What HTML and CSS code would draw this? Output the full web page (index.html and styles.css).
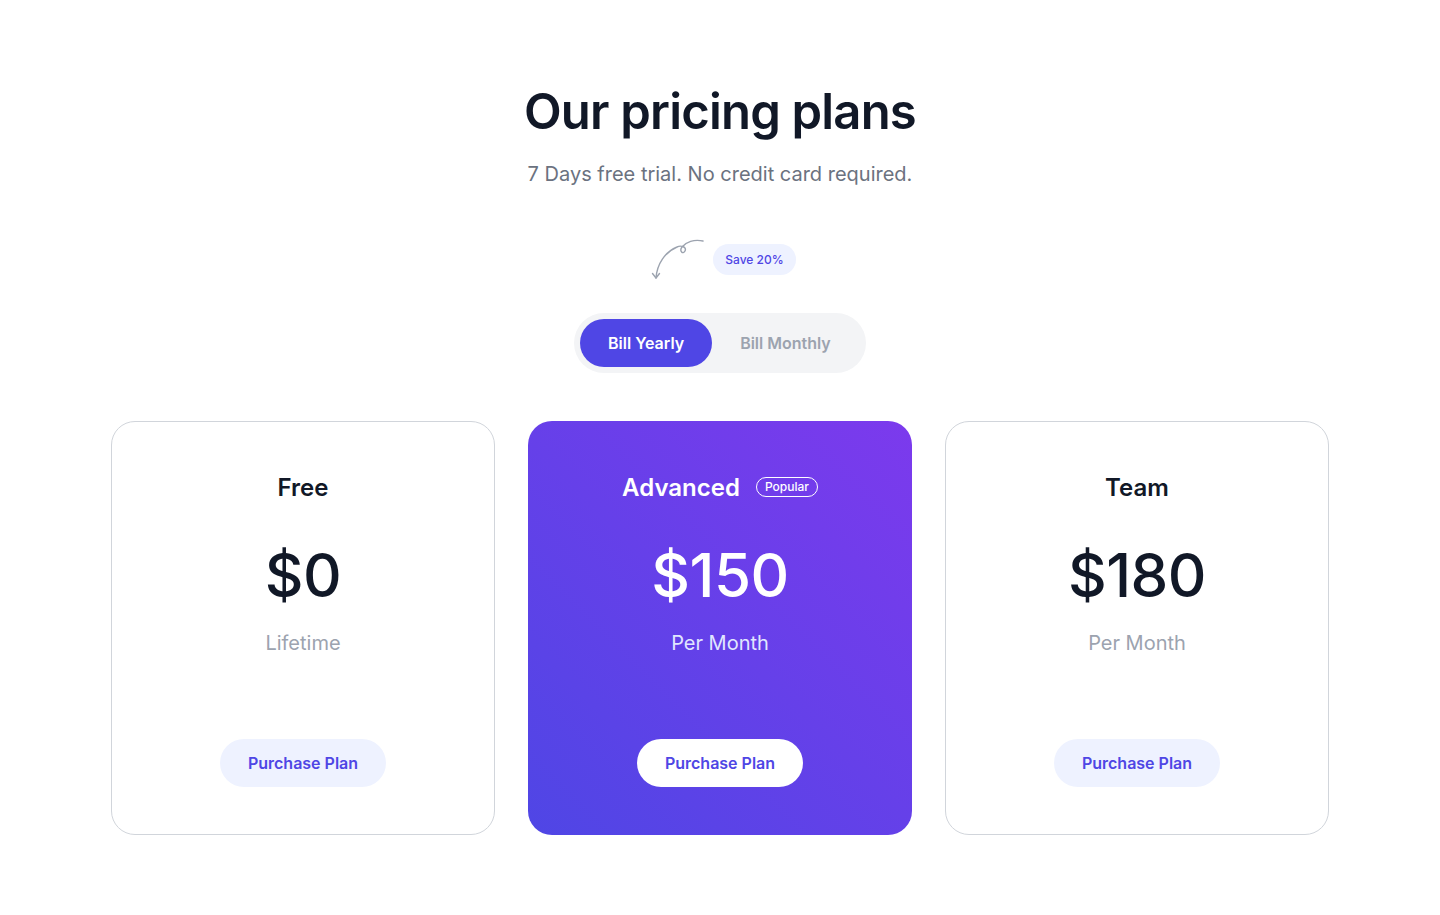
FILE: index.html
```html
<!DOCTYPE html>
<html lang="en">
<head>
<meta charset="utf-8">
<title>Pricing</title>
<link rel="stylesheet" href="styles.css">
</head>
<body>
<section class="pricing">
  <h1 class="title">Our pricing plans</h1>
  <p class="subtitle">7 Days free trial. No credit card required.</p>

  <div class="save-row">
    <svg class="arrow" width="54" height="42" viewBox="0 0 54 42" fill="none" stroke="#9ca3af" stroke-width="1.4" stroke-linecap="round" stroke-linejoin="round">
      <path d="M53 3 C44 1 36 4 32 9 C29 13 33 17 35 13 C37 9 31 7 27 9 C15 14 7 26 6 40"/>
      <path d="M2.5 35.5 L6 40 L9.5 35.5"/>
    </svg>
    <span class="save-badge">Save 20%</span>
  </div>

  <div class="toggle">
    <button class="toggle-btn active">Bill Yearly</button>
    <button class="toggle-btn">Bill Monthly</button>
  </div>

  <div class="cards">
    <div class="card">
      <h3 class="plan-name">Free</h3>
      <div class="price">$0</div>
      <div class="period">Lifetime</div>
      <button class="buy">Purchase Plan</button>
    </div>
    <div class="card featured">
      <h3 class="plan-name">Advanced <span class="popular">Popular</span></h3>
      <div class="price">$150</div>
      <div class="period">Per Month</div>
      <button class="buy">Purchase Plan</button>
    </div>
    <div class="card">
      <h3 class="plan-name">Team</h3>
      <div class="price">$180</div>
      <div class="period">Per Month</div>
      <button class="buy">Purchase Plan</button>
    </div>
  </div>
</section>
</body>
</html>
```
FILE: styles.css
```css
* { box-sizing: border-box; }
html, body { margin: 0; padding: 0; background: #ffffff; }
body {
  font-family: Inter, "Noto Sans", "Liberation Sans", sans-serif;
  color: #111827;
}
.pricing {
  display: flex;
  flex-direction: column;
  align-items: center;
  padding-top: 83px;
}
.title {
  margin: 0;
  font-size: 49px;
  line-height: 58px;
  font-weight: 600;
  letter-spacing: -0.8px;
  color: #111827;
}
.subtitle {
  margin: 19px 0 0;
  font-size: 20px;
  line-height: 28px;
  color: #6b7280;
}
.save-row {
  margin-top: 50px;
  display: flex;
  align-items: center;
  gap: 9px;
  height: 42px;
  margin-left: 6px;
}
.arrow { display: block; }
.save-badge {
  display: inline-flex;
  align-items: center;
  height: 31px;
  padding: 0 12px;
  border-radius: 999px;
  background: #eef2ff;
  color: #4f46e5;
  font-size: 12px;
  font-weight: 500;
}
.toggle {
  margin-top: 33px;
  display: flex;
  align-items: center;
  padding: 6px;
  border-radius: 999px;
  background: #f3f4f6;
  width: 292px;
  height: 60px;
}
.toggle-btn {
  border: 0;
  background: transparent;
  font-family: inherit;
  font-size: 16px;
  font-weight: 600;
  color: #9ca3af;
  height: 48px;
  border-radius: 999px;
  padding: 0 28px;
  cursor: pointer;
}
.toggle-btn.active {
  background: #4f46e5;
  color: #ffffff;
}
.cards {
  margin-top: 48px;
  display: flex;
  gap: 33px;
  width: 1218px;
}
.card {
  flex: 1;
  height: 414px;
  border: 1px solid #d1d5db;
  border-radius: 24px;
  display: flex;
  flex-direction: column;
  align-items: center;
  padding-top: 50px;
  background: #ffffff;
}
.card.featured {
  border-color: transparent;
  background: linear-gradient(45deg, #4f46e5 0%, #7c3aed 100%);
  background-origin: border-box;
  color: #ffffff;
}
.plan-name {
  margin: 0;
  font-size: 24px;
  line-height: 32px;
  font-weight: 600;
  display: flex;
  align-items: center;
  gap: 16px;
}
.popular {
  display: inline-flex;
  align-items: center;
  height: 20px;
  padding: 0 8px;
  border: 1px solid #ffffff;
  border-radius: 999px;
  font-size: 12px;
  font-weight: 500;
  margin-top: -2px;
}
.price {
  margin-top: 35px;
  font-size: 60px;
  line-height: 72px;
  font-weight: 500;
  letter-spacing: -0.5px;
}
.period {
  margin-top: 18px;
  font-size: 20px;
  line-height: 28px;
  color: #9ca3af;
}
.featured .period { color: #e0e7ff; }
.buy {
  margin-top: 82px;
  height: 48px;
  width: 166px;
  border: 0;
  border-radius: 999px;
  background: #eef2ff;
  color: #4f46e5;
  font-family: inherit;
  font-size: 16px;
  font-weight: 600;
  cursor: pointer;
}
.featured .buy { background: #ffffff; }
```
